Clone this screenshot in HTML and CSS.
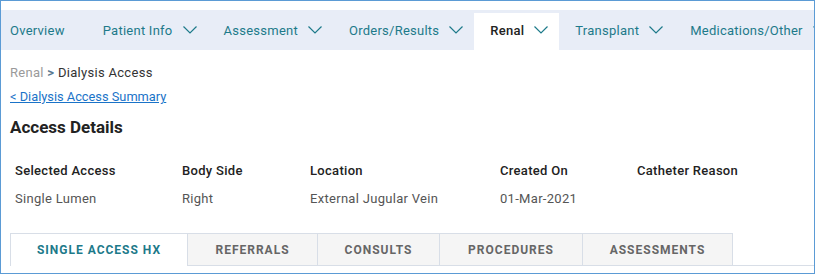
FILE: index.html
```html
<!DOCTYPE html>
<html lang="en">
<head>
    <meta charset="UTF-8">
    <meta name="viewport" content="width=device-width, initial-scale=1.0">
    <title>Dialysis Access</title>
    <link rel="stylesheet" href="styles.css">
</head>
<body>
    <div class="frame">
        <!-- Menu principal -->
        <nav class="main-nav">
            <a class="nav-item nav-first">Overview</a>
            <a class="nav-item">Patient Info <svg class="chev" viewBox="0 0 14 8"><polyline points="0.5,0.5 7,7 13.5,0.5"/></svg></a>
            <a class="nav-item">Assessment <svg class="chev" viewBox="0 0 14 8"><polyline points="0.5,0.5 7,7 13.5,0.5"/></svg></a>
            <a class="nav-item">Orders/Results <svg class="chev" viewBox="0 0 14 8"><polyline points="0.5,0.5 7,7 13.5,0.5"/></svg></a>
            <a class="nav-item active">Renal <svg class="chev" viewBox="0 0 14 8"><polyline points="0.5,0.5 7,7 13.5,0.5"/></svg></a>
            <a class="nav-item">Transplant <svg class="chev" viewBox="0 0 14 8"><polyline points="0.5,0.5 7,7 13.5,0.5"/></svg></a>
            <a class="nav-item">Medications/Other <svg class="chev" viewBox="0 0 14 8"><polyline points="0.5,0.5 7,7 13.5,0.5"/></svg></a>
        </nav>

        <div class="content">
            <div class="breadcrumb">
                <span class="crumb-parent">Renal</span>
                <span class="crumb-sep">&gt;</span>
                <span class="crumb-current">Dialysis Access</span>
            </div>
            <a class="back-link" href="#">&lt; Dialysis Access Summary</a>
            <h2 class="section-title">Access Details</h2>

            <div class="details">
                <div class="col col-1">
                    <div class="label">Selected Access</div>
                    <div class="value">Single Lumen</div>
                </div>
                <div class="col col-2">
                    <div class="label">Body Side</div>
                    <div class="value">Right</div>
                </div>
                <div class="col col-3">
                    <div class="label">Location</div>
                    <div class="value">External Jugular Vein</div>
                </div>
                <div class="col col-4">
                    <div class="label">Created On</div>
                    <div class="value">01-Mar-2021</div>
                </div>
                <div class="col col-5">
                    <div class="label">Catheter Reason</div>
                    <div class="value"></div>
                </div>
            </div>

            <!-- Pestañas -->
            <div class="tabs">
                <div class="tab tab-hx active">SINGLE ACCESS HX</div>
                <div class="tab tab-ref">REFERRALS</div>
                <div class="tab tab-con">CONSULTS</div>
                <div class="tab tab-pro">PROCEDURES</div>
                <div class="tab tab-ass">ASSESSMENTS</div>
            </div>
        </div>
    </div>
</body>
</html>
```

FILE: styles.css
```css
body {
    margin: 0;
    font-family: Roboto, "Noto Sans", sans-serif;
    background: #ffffff;
    color: #333;
}

.frame {
    width: 813px;
    height: 272px;
    border: 1px solid #5b9bd5;
    overflow: hidden;
    background: #fff;
}

/* Menu principal */
.main-nav {
    display: flex;
    margin-top: 9px;
    height: 40px;
    background: #e8edf7;
    white-space: nowrap;
}

.nav-item {
    display: flex;
    align-items: center;
    gap: 10px;
    padding: 0 11px 0 16px;
    font-size: 13px;
    letter-spacing: 0.25px;
    color: #1d7a8a;
    cursor: pointer;
}

.nav-first {
    padding: 0 22px 0 9px;
}

.nav-item.active {
    background: #fff;
    margin-top: 3px;
    padding-bottom: 3px;
    color: #222;
    font-weight: 500;
}

.chev {
    width: 14px;
    height: 8px;
    fill: none;
    stroke: #1d7a8a;
    stroke-width: 1.2;
}

.content {
    padding: 0 0 0 9px;
}

.breadcrumb {
    margin-top: 15px;
    font-size: 13px;
    line-height: 16px;
    letter-spacing: 0.3px;
}

.crumb-parent {
    color: #9a9a9a;
}

.crumb-sep {
    color: #5a7a92;
    font-weight: 700;
}

.crumb-current {
    color: #333;
}

.back-link {
    display: inline-block;
    margin-top: 9px;
    font-size: 12.8px;
    line-height: 14px;
    color: #1a73c8;
}

.section-title {
    margin: 12px 0 0;
    font-size: 17px;
    line-height: 20px;
    font-weight: 700;
    color: #222;
}

.details {
    display: flex;
    margin-top: 26px;
    padding-left: 5px;
}

.col-1 { width: 167px; }
.col-2 { width: 128px; }
.col-3 { width: 190px; }
.col-4 { width: 137px; }
.col-5 { width: 150px; }

.label {
    font-size: 13px;
    line-height: 16px;
    font-weight: 500;
    letter-spacing: 0.3px;
    color: #222;
}

.value {
    margin-top: 12px;
    font-size: 13px;
    line-height: 16px;
    letter-spacing: 0.3px;
    color: #555;
    height: 16px;
}

/* Pestañas */
.tabs {
    display: flex;
    margin-top: 26px;
    border-bottom: 1px solid #d8dee7;
}

.tab {
    height: 32px;
    display: flex;
    align-items: center;
    justify-content: center;
    box-sizing: border-box;
    font-size: 12px;
    font-weight: 700;
    letter-spacing: 1px;
    color: #666;
    background: #f5f5f5;
    border: 1px solid #d8dee7;
    border-bottom: none;
    border-left: none;
    margin-bottom: -1px;
}

.tab-hx { width: 178px; }
.tab-ref { width: 130px; }
.tab-con { width: 122px; }
.tab-pro { width: 143px; }
.tab-ass { width: 150px; }

.tab.active {
    background: #fff;
    color: #1d7a8a;
    border-left: 1px solid #d8dee7;
    height: 33px;
}
```
